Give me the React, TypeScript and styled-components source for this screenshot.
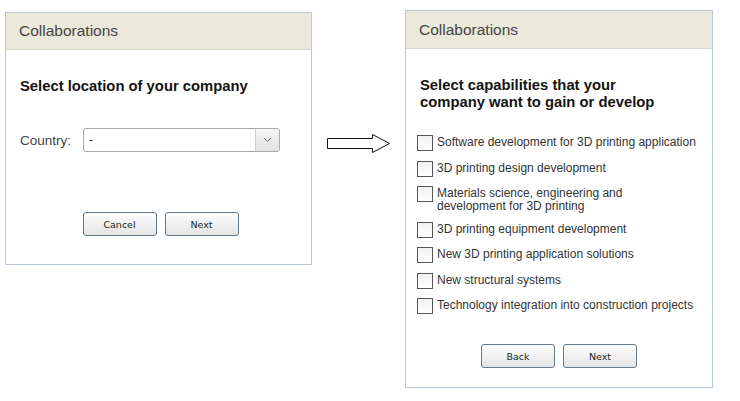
import React from 'react';
import styled, { createGlobalStyle } from 'styled-components';

const GlobalStyle = createGlobalStyle`
  body {
    margin: 0;
    background: #ffffff;
    font-family: 'Liberation Sans', Arial, sans-serif;
  }
`;

const capabilities = [
  'Software development for 3D printing application',
  '3D printing design development',
  'Materials science, engineering and\ndevelopment for 3D printing',
  '3D printing equipment development',
  'New 3D printing application solutions',
  'New structural systems',
  'Technology integration into construction projects',
];

const Page = styled.div`
  display: flex;
  align-items: flex-start;
  padding: 10px 0 0 5px;
`;

const Panel = styled.div<{ $width: number; $height: number; $offset: number }>`
  display: flex;
  flex-direction: column;
  box-sizing: border-box;
  width: ${p => p.$width}px;
  height: ${p => p.$height}px;
  margin-top: ${p => p.$offset}px;
  border: 1px solid #bac7d4;
  background: #ffffff;
`;

const Header = styled.div<{ $height: number }>`
  display: flex;
  align-items: center;
  height: ${p => p.$height}px;
  padding-left: 13px;
  background: #ebe9dc;
  border-bottom: 1px solid #d9d8cf;
  color: #454545;
  font-size: 15.5px;
`;

const Body = styled.div<{ $top: number }>`
  display: flex;
  flex-direction: column;
  flex: 1;
  padding: ${p => p.$top}px 14px 0 14px;
`;

const Heading = styled.h2`
  margin: 0;
  font-size: 14.8px;
  line-height: 17px;
  font-weight: 700;
  color: #141414;
`;

const FieldRow = styled.div`
  display: flex;
  align-items: center;
  margin-top: 33px;
`;

const Label = styled.span`
  width: 63px;
  font-size: 13.5px;
  color: #454545;
`;

const Select = styled.div`
  display: flex;
  box-sizing: border-box;
  width: 197px;
  height: 24px;
  border: 1px solid #a9a9a9;
  border-radius: 3px;
  overflow: hidden;
`;

const SelectValue = styled.div`
  flex: 1;
  display: flex;
  align-items: center;
  padding-left: 5px;
  font-size: 12px;
  color: #222;
`;

const SelectButton = styled.div`
  display: flex;
  align-items: center;
  justify-content: center;
  width: 23px;
  border-left: 1px solid #cfcfcf;
  background: linear-gradient(#f5f5f5, #e2e2e2);
`;

const ButtonRow = styled.div<{ $top: number; $shift: number }>`
  display: flex;
  justify-content: center;
  gap: 8px;
  margin-top: ${p => p.$top}px;
  margin-left: ${p => p.$shift}px;
`;

const Button = styled.button`
  box-sizing: border-box;
  width: 74px;
  height: 24px;
  padding: 0;
  border: 1px solid #65798b;
  border-radius: 3px;
  background: linear-gradient(#fefefe, #e4e4e4);
  font-family: 'DejaVu Sans', Tahoma, sans-serif;
  font-size: 9.5px;
  color: #1e1e1e;
`;

const CheckList = styled.div`
  display: flex;
  flex-direction: column;
  gap: 9.5px;
  margin: 24px 0 0 -3px;
`;

const CheckRow = styled.label`
  display: flex;
  align-items: flex-start;
  gap: 4px;
`;

const Box = styled.span`
  flex: none;
  box-sizing: border-box;
  width: 16px;
  height: 16px;
  border: 1px solid #565656;
  background: linear-gradient(#f2f2f2, #ffffff);
`;

const CheckText = styled.span`
  padding-top: 1px;
  font-size: 12px;
  line-height: 12.5px;
  color: #333;
  white-space: pre-line;
`;

const ArrowSlot = styled.div`
  width: 93px;
  padding: 123px 0 0 14px;
  box-sizing: border-box;
`;

const Chevron = () => (
  <svg width="9" height="6" viewBox="0 0 9 6">
    <path d="M1 1 L4.5 4.5 L8 1" fill="none" stroke="#666" strokeWidth="1" />
  </svg>
);

const Arrow = () => (
  <svg width="65" height="21" viewBox="0 0 65 21">
    <polygon
      points="1.5,5.5 46.5,5.5 46.5,1.5 63.5,10.5 46.5,19.5 46.5,15.5 1.5,15.5"
      fill="#ffffff"
      stroke="#111"
      strokeWidth="1"
    />
  </svg>
);

const App: React.FC = () => (
  <Page>
    <GlobalStyle />
    <Panel $width={307} $height={253} $offset={2}>
      <Header $height={36}>Collaborations</Header>
      <Body $top={28}>
        <Heading>Select location of your company</Heading>
        <FieldRow>
          <Label>Country:</Label>
          <Select>
            <SelectValue>-</SelectValue>
            <SelectButton>
              <Chevron />
            </SelectButton>
          </Select>
        </FieldRow>
        <ButtonRow $top={60} $shift={4}>
          <Button>Cancel</Button>
          <Button>Next</Button>
        </ButtonRow>
      </Body>
    </Panel>
    <ArrowSlot>
      <Arrow />
    </ArrowSlot>
    <Panel $width={308} $height={378} $offset={0}>
      <Header $height={37}>Collaborations</Header>
      <Body $top={28}>
        <Heading>
          Select capabilities that your
          <br />
          company want to gain or develop
        </Heading>
        <CheckList>
          {capabilities.map(c => (
            <CheckRow key={c}>
              <Box />
              <CheckText>{c}</CheckText>
            </CheckRow>
          ))}
        </CheckList>
        <ButtonRow $top={30} $shift={0}>
          <Button>Back</Button>
          <Button>Next</Button>
        </ButtonRow>
      </Body>
    </Panel>
  </Page>
);

export default App;
